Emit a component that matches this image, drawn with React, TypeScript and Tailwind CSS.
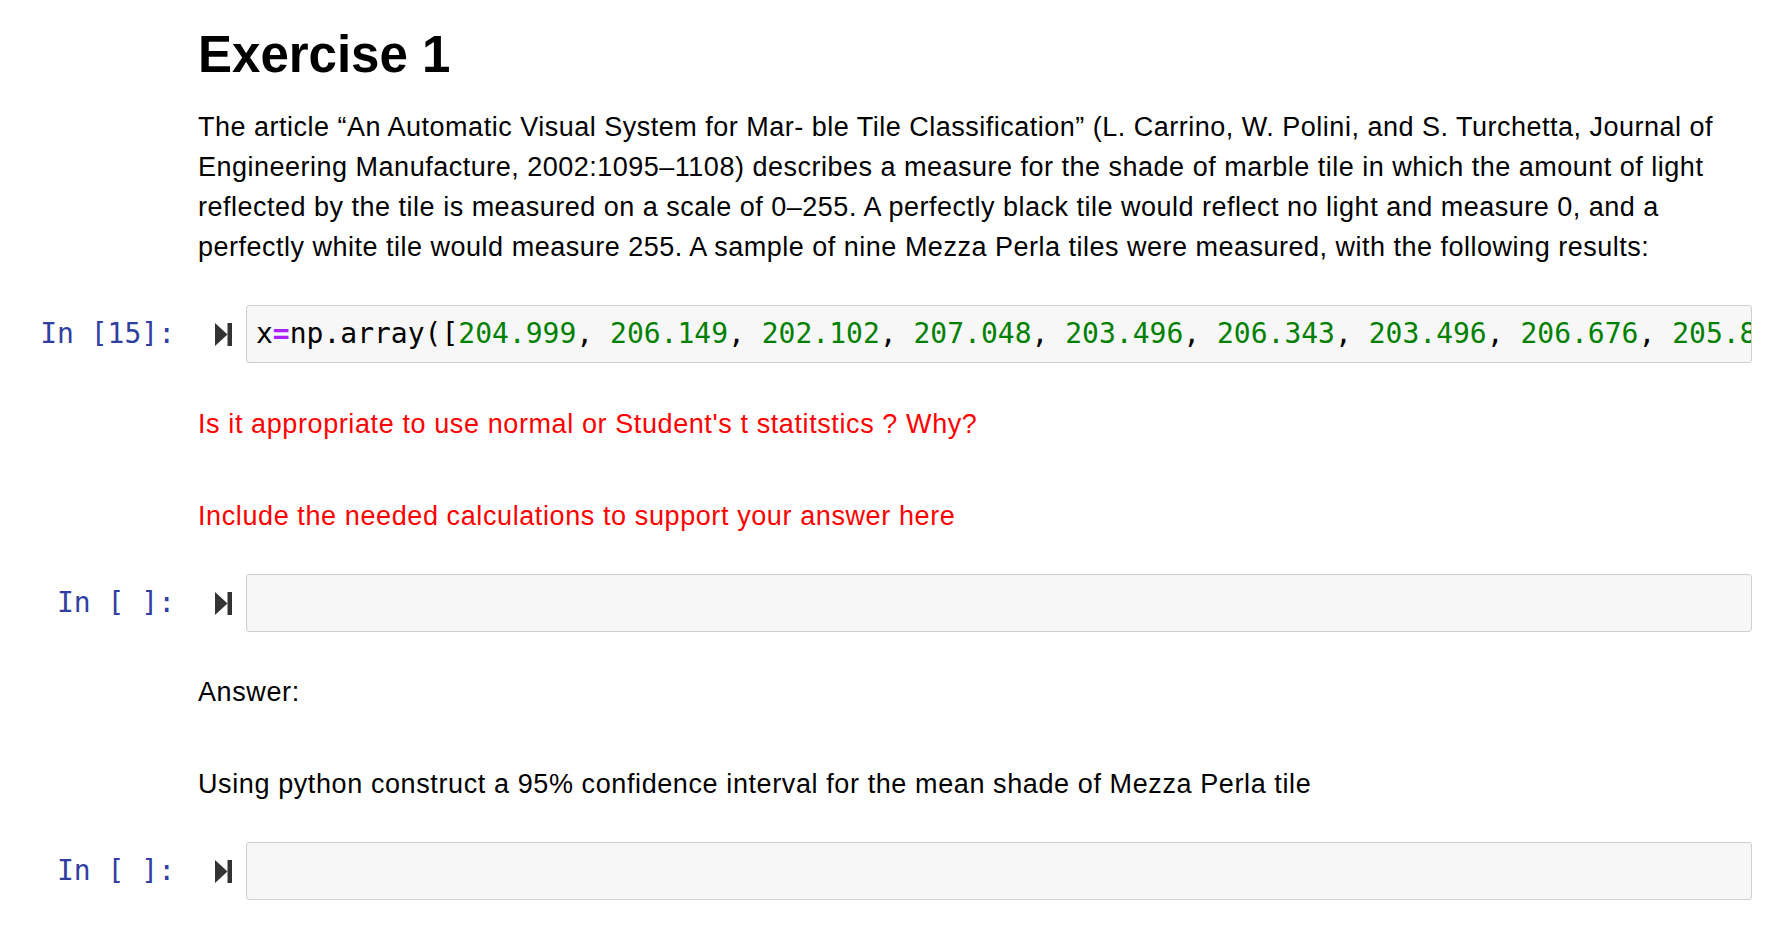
import React from "react";

const mono = { fontFamily: '"DejaVu Sans Mono", "Liberation Mono", monospace' };

function RunIcon() {
  return (
    <svg width="17" height="23" viewBox="0 0 17 23" className="shrink-0">
      <polygon points="0,0 12.5,11.5 0,23" fill="#333333" />
      <rect x="12.5" y="0" width="4.5" height="23" fill="#333333" />
    </svg>
  );
}

function CodeCell({ count, children }: { count?: number; children?: React.ReactNode }) {
  return (
    <div className="flex items-center">
      <div
        className="w-[175px] shrink-0 text-right text-[28px] leading-[32px] text-[#303f9f] whitespace-pre"
        style={mono}
      >
        {`In [${count ?? " "}]:`}
      </div>
      <div className="ml-[40px]">
        <RunIcon />
      </div>
      <div
        className="ml-[14px] flex-1 min-w-0 h-[58px] overflow-hidden rounded-[3px] border border-[#cfcfcf] bg-[#f7f7f7] pl-[9px] pr-[10px] py-[12px] text-[28px] leading-[32px] text-black whitespace-pre"
        style={mono}
      >
        {children}
      </div>
    </div>
  );
}

const values = ["204.999", "206.149", "202.102", "207.048", "203.496", "206.343", "203.496", "206.676", "205.831"];

export default function App() {
  return (
    <div
      className="w-[1765px] h-[936px] overflow-hidden bg-white pr-[13px] text-black"
      style={{ fontFamily: '"Liberation Sans", Arial, Helvetica, sans-serif' }}
    >
      {/* heading + intro */}
      <div className="pl-[198px]">
        <h1 className="mt-[25px] text-[51px] font-bold leading-[60px]">Exercise 1</h1>
        <p className="mt-[22px] text-[27px] leading-[40px] tracking-[0.5px]">
          The article “An Automatic Visual System for Mar- ble Tile Classification” (L. Carrino, W. Polini, and S. Turchetta, Journal of
          <br />
          Engineering Manufacture, 2002:1095–1108) describes a measure for the shade of marble tile in which the amount of light
          <br />
          reflected by the tile is measured on a scale of 0–255. A perfectly black tile would reflect no light and measure 0, and a
          <br />
          perfectly white tile would measure 255. A sample of nine Mezza Perla tiles were measured, with the following results:
        </p>
      </div>

      <div className="mt-[38px]">
        <CodeCell count={15}>
          <span>x</span>
          <span className="font-bold text-[#aa22ff]">=</span>
          <span>np.array([</span>
          {values.map((v, i) => (
            <React.Fragment key={i}>
              <span className="text-[#008000]">{v}</span>
              {i < values.length - 1 ? <span>, </span> : <span>])</span>}
            </React.Fragment>
          ))}
        </CodeCell>
      </div>

      <div className="pl-[198px] text-[27px] leading-[40px] tracking-[0.6px]">
        <p className="mt-[41px] text-[#ff0000]">Is it appropriate to use normal or Student's t statitstics ? Why?</p>
        <p className="mt-[52px] text-[#ff0000]">Include the needed calculations to support your answer here</p>
      </div>

      <div className="mt-[38px]">
        <CodeCell />
      </div>

      <div className="pl-[198px] text-[27px] leading-[40px] tracking-[0.6px]">
        <p className="mt-[40px]">Answer:</p>
        <p className="mt-[52px]">Using python construct a 95% confidence interval for the mean shade of Mezza Perla tile</p>
      </div>

      <div className="mt-[38px]">
        <CodeCell />
      </div>
    </div>
  );
}
